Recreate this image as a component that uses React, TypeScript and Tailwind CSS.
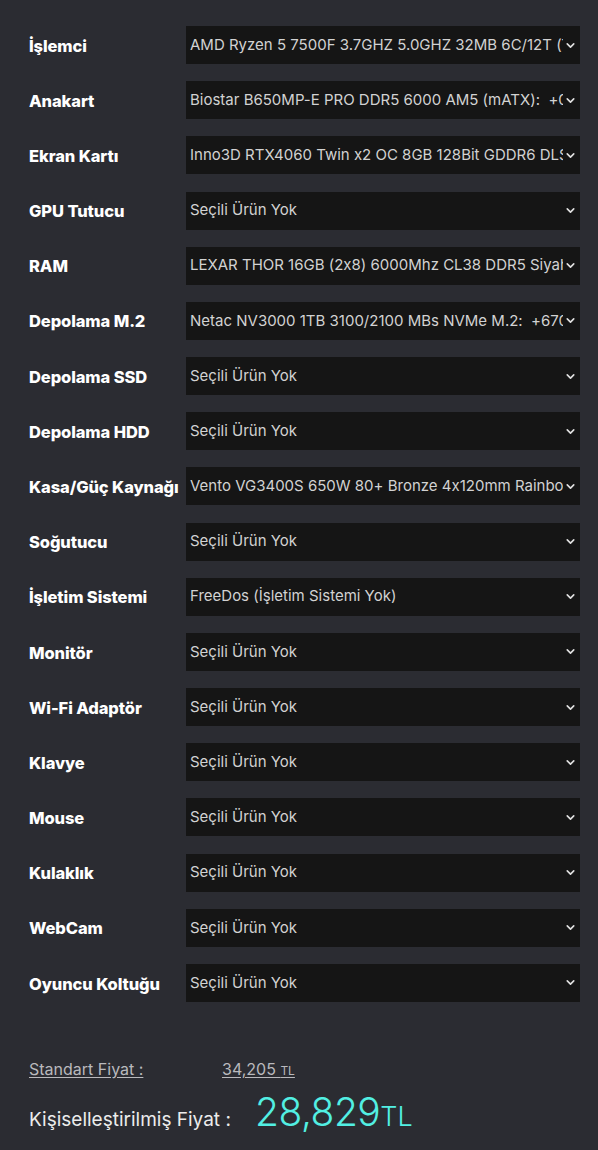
import { ChevronDown } from 'lucide-react';

const parts: Array<{ label: string; value: string }> = [
    { label: 'İşlemci', value: 'AMD Ryzen 5 7500F 3.7GHZ 5.0GHZ 32MB 6C/12T (Tray)' },
    { label: 'Anakart', value: 'Biostar B650MP-E PRO DDR5 6000 AM5 (mATX):  +0 TL' },
    { label: 'Ekran Kartı', value: 'Inno3D RTX4060 Twin x2 OC 8GB 128Bit GDDR6 DLSS 3' },
    { label: 'GPU Tutucu', value: 'Seçili Ürün Yok' },
    { label: 'RAM', value: 'LEXAR THOR 16GB (2x8) 6000Mhz CL38 DDR5 Siyah' },
    { label: 'Depolama M.2', value: 'Netac NV3000 1TB 3100/2100 MBs NVMe M.2:  +670 TL' },
    { label: 'Depolama SSD', value: 'Seçili Ürün Yok' },
    { label: 'Depolama HDD', value: 'Seçili Ürün Yok' },
    { label: 'Kasa/Güç Kaynağı', value: 'Vento VG3400S 650W 80+ Bronze 4x120mm Rainbow' },
    { label: 'Soğutucu', value: 'Seçili Ürün Yok' },
    { label: 'İşletim Sistemi', value: 'FreeDos (İşletim Sistemi Yok)' },
    { label: 'Monitör', value: 'Seçili Ürün Yok' },
    { label: 'Wi-Fi Adaptör', value: 'Seçili Ürün Yok' },
    { label: 'Klavye', value: 'Seçili Ürün Yok' },
    { label: 'Mouse', value: 'Seçili Ürün Yok' },
    { label: 'Kulaklık', value: 'Seçili Ürün Yok' },
    { label: 'WebCam', value: 'Seçili Ürün Yok' },
    { label: 'Oyuncu Koltuğu', value: 'Seçili Ürün Yok' },
];

export default function App() {
    return (
        <div className="w-[598px] h-[1150px] bg-[#2b2c32] font-['Inter',sans-serif] [font-feature-settings:'calt'_0] overflow-hidden">
            <div className="pt-[26px] pl-[29px] pr-[18px] flex flex-col gap-[17.18px]">
                {parts.map((p) => (
                    <div key={p.label} className="flex items-center h-[38px]">
                        <div className="w-[157px] shrink-0 pt-[2px] text-white font-extrabold text-[16.5px] tracking-[-0.1px] whitespace-nowrap">
                            {p.label}
                        </div>
                        <div className="flex-1 min-w-0 h-[38px] bg-[#151515] flex items-center pl-[4px] pr-[3px]">
                            <span className="flex-1 min-w-0 overflow-hidden whitespace-pre text-[15px] text-[#d2d2d2]">
                                {p.value}
                            </span>
                            <ChevronDown className="w-[13px] h-[13px] text-[#e0e0e0] shrink-0 ml-[1px]" strokeWidth={3} />
                        </div>
                    </div>
                ))}
            </div>

            <div className="pl-[29px] mt-[55px]">
                <div className="flex items-baseline text-[16px] text-[#b9b9bd]">
                    <span className="w-[193px] underline underline-offset-2">Standart Fiyat :</span>
                    <span className="underline underline-offset-2">
                        34,205 <span className="text-[12px]">TL</span>
                    </span>
                </div>
                <div className="flex items-baseline mt-[2px]">
                    <span className="w-[226px] text-[19px] text-[#ececec]">Kişiselleştirilmiş Fiyat :</span>
                    <span className="text-[39px] text-[#52efe3] font-light tracking-[-0.5px]">28,829</span>
                    <span className="text-[27px] text-[#52efe3] font-light">TL</span>
                </div>
            </div>
        </div>
    );
}
